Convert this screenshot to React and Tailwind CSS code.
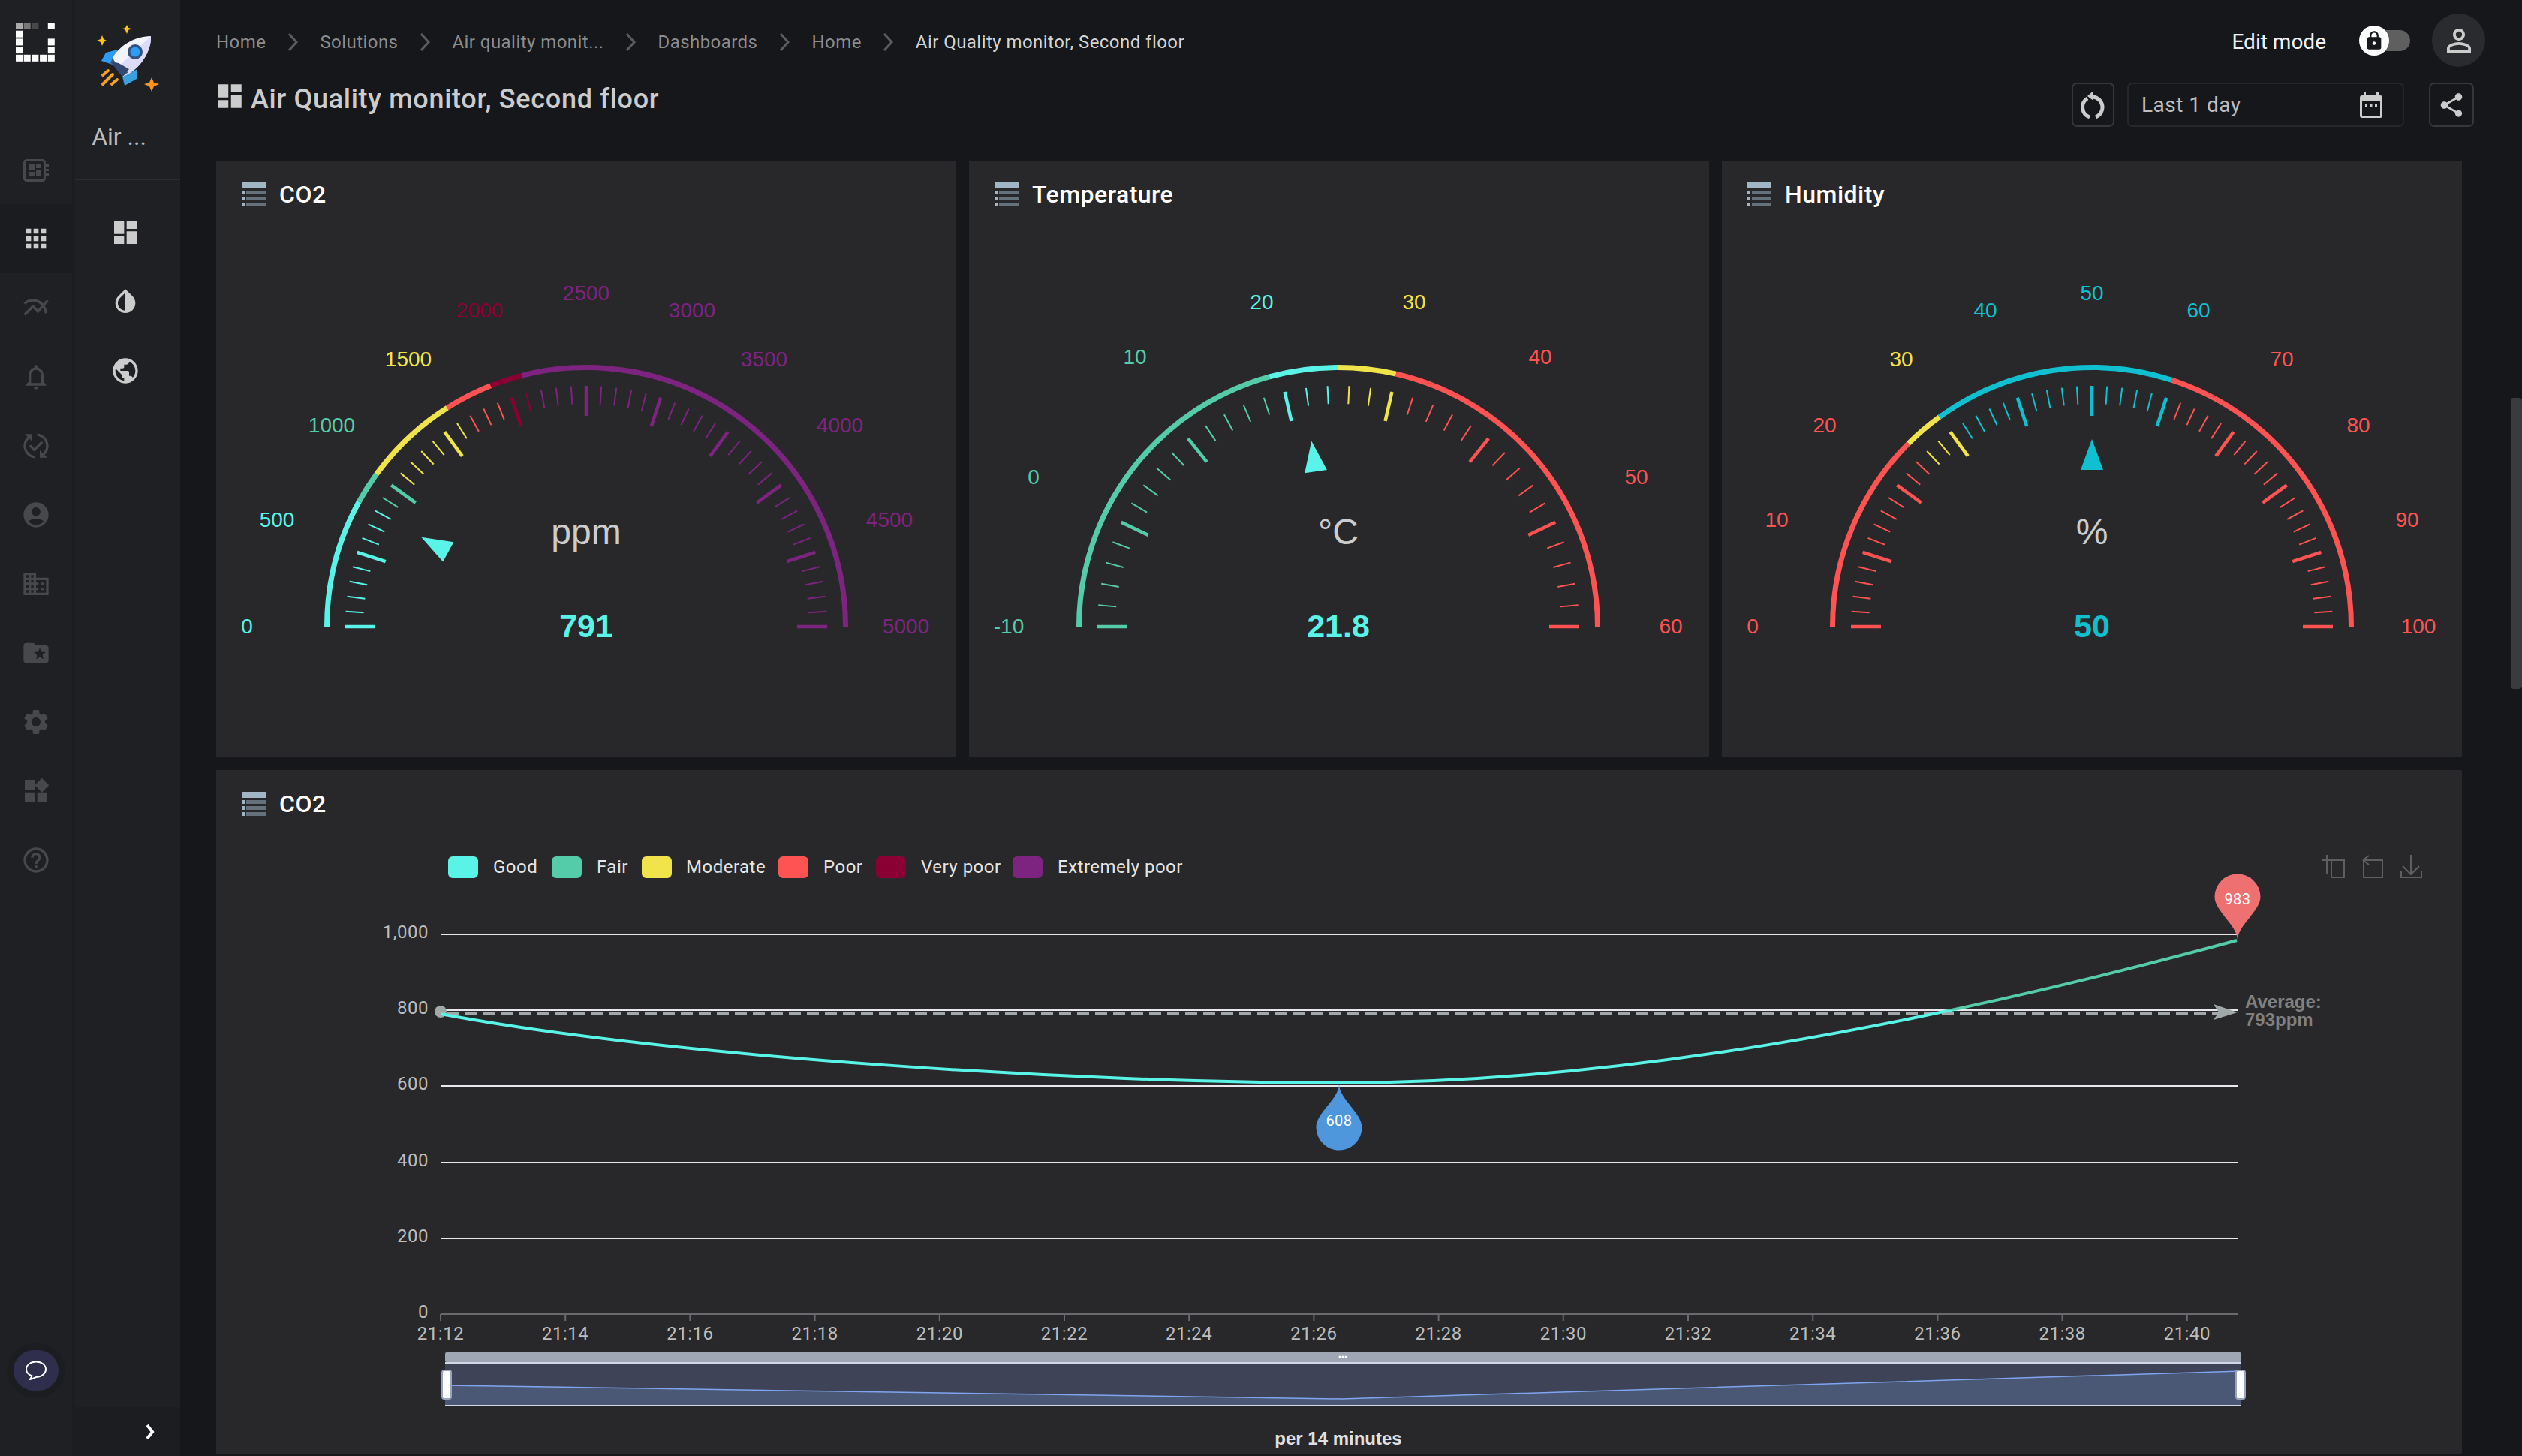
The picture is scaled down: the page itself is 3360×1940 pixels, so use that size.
import {
  MdApps, MdMultilineChart, MdNotificationsNone, MdPublishedWithChanges, MdAccountCircle, MdDomain,
  MdFolderSpecial, MdSettings, MdWidgets, MdHelpOutline, MdDashboard, MdInvertColors, MdPublic,
  MdShare, MdLock, MdPersonOutline,
} from 'react-icons/md';

const CYAN = '#5af3e7';
const GREEN = '#55cca9';
const YELLOW = '#f0e44a';
const RED = '#ff5252';
const DARKRED = '#8b0032';
const PURPLE = '#7c2480';
const TEAL = '#10c0d0';

const GAUGES = [
  {
    title: 'CO2', x: 288, cx: 781, min: 0, max: 5000, splits: 10, value: 791, text: '791', unit: 'ppm',
    stops: [[800, CYAN], [1000, GREEN], [1600, YELLOW], [1900, RED], [2100, DARKRED], [5000, PURPLE]],
    labels: [[0, 329, 834], [500, 369, 692], [1000, 442, 566], [1500, 544, 478], [2000, 639, 413], [2500, 781, 390], [3000, 922, 413], [3500, 1018, 478], [4000, 1119, 566], [4500, 1185, 692], [5000, 1207, 834]],
  },
  {
    title: 'Temperature', x: 1291, cx: 1783, min: -10, max: 60, splits: 7, value: 21.8, text: '21.8', unit: '°C',
    stops: [[19, GREEN], [25, CYAN], [30, YELLOW], [60, RED]],
    labels: [[-10, 1344, 834], [0, 1377, 635], [10, 1512, 475], [20, 1681, 402], [30, 1884, 402], [40, 2052, 475], [50, 2180, 635], [60, 2226, 834]],
  },
  {
    title: 'Humidity', x: 2294, cx: 2787, min: 0, max: 100, splits: 10, value: 50, text: '50', unit: '%',
    stops: [[25, RED], [30, YELLOW], [60, TEAL], [100, RED]],
    labels: [[0, 2335, 834], [10, 2367, 692], [20, 2431, 566], [30, 2533, 478], [40, 2645, 413], [50, 2787, 390], [60, 2929, 413], [70, 3040, 478], [80, 3142, 566], [90, 3207, 692], [100, 3222, 834]],
  },
];

const LEGEND = [
  ['Good', CYAN, 597, 657], ['Fair', GREEN, 735, 795], ['Moderate', YELLOW, 855, 914],
  ['Poor', RED, 1037, 1097], ['Very poor', DARKRED, 1167, 1227], ['Extremely poor', PURPLE, 1349, 1409],
];

const TIMES = ['21:12', '21:14', '21:16', '21:18', '21:20', '21:22', '21:24', '21:26', '21:28', '21:30', '21:32', '21:34', '21:36', '21:38', '21:40'];
const Y_AXIS = [['1,000', 1245], ['800', 1346], ['600', 1447], ['400', 1549], ['200', 1650]];
const CRUMBS = ['Home', 'Solutions', 'Air quality monit...', 'Dashboards', 'Home'];

const RAIL = [MdMultilineChart, MdNotificationsNone, MdPublishedWithChanges, MdAccountCircle, MdDomain, MdFolderSpecial, MdSettings, MdWidgets, MdHelpOutline];
const PIN = 'M0,0 C-1,-20 -30.5,-38 -30.5,-57 A30.5,30.5 0 0 1 30.5,-57 C30.5,-38 1,-20 0,0 Z';

const polar = (cx, cy, r, deg) => {
  const a = (deg * Math.PI) / 180;
  return [cx - r * Math.cos(a), cy - r * Math.sin(a)];
};

function TableIcon() {
  return (
    <svg width="32" height="32" viewBox="0 0 32 32">
      <rect width="32" height="8" fill="#a0b6c5" />
      {[11, 19, 27].map((y) => (
        <g key={y}>
          <rect y={y} width="4" height="5" fill="#a0b6c5" />
          <rect x="6" y={y} width="26" height="5" fill="#65727b" />
        </g>
      ))}
    </svg>
  );
}

function CardTitle({ children }) {
  return (
    <div className="flex items-center gap-[18px] h-[88px] pl-[34px] pt-[1px] text-[32px] leading-none font-medium tracking-[0.5px] text-white">
      <TableIcon />
      <span>{children}</span>
    </div>
  );
}

function Gauge({ g }) {
  const cy = 835;
  const colorFor = (v) => g.stops.find(([limit]) => v <= limit + 0.0001)[1];
  const deg = (v) => ((v - g.min) / (g.max - g.min)) * 180;
  const total = g.splits * 5;
  const mainColor = colorFor(g.value);
  const a = deg(g.value);
  const tip = polar(g.cx, cy, 250, a);
  const base = polar(g.cx, cy, 209, a);
  const rad = (a * Math.PI) / 180;
  const nx = Math.sin(rad) * 15;
  const ny = -Math.cos(rad) * 15;

  let prev = g.min;
  const arcs = g.stops.map(([limit, color]) => {
    const [x1, y1] = polar(g.cx, cy, 345.5, deg(prev));
    const [x2, y2] = polar(g.cx, cy, 345.5, deg(limit));
    prev = limit;
    return <path key={limit} d={`M${x1} ${y1} A345.5 345.5 0 0 1 ${x2} ${y2}`} fill="none" stroke={color} strokeWidth="7" />;
  });

  const ticks = [];
  for (let i = 0; i <= total; i++) {
    const v = g.min + ((g.max - g.min) * i) / total;
    const major = i % 5 === 0;
    const [x1, y1] = polar(g.cx, cy, 321, (i / total) * 180);
    const [x2, y2] = polar(g.cx, cy, major ? 281 : 297, (i / total) * 180);
    ticks.push(<line key={i} x1={x1} y1={y1} x2={x2} y2={y2} stroke={colorFor(v)} strokeWidth={major ? 4.5 : 2} />);
  }

  return (
    <div className="bg-[#28282a] h-[794px]">
      <CardTitle>{g.title}</CardTitle>
      <svg className="block font-['Liberation_Sans',sans-serif]" width="986" height="706" viewBox={`${g.x} 302 986 706`}>
        {arcs}
        {ticks}
        <polygon points={`${tip[0]},${tip[1]} ${base[0] + nx},${base[1] + ny} ${base[0] - nx},${base[1] - ny}`} fill={mainColor} />
        {g.labels.map(([v, x, y]) => (
          <text key={v} x={x} y={y + 10} textAnchor="middle" fontSize="28" fill={colorFor(v)}>{v}</text>
        ))}
        <text x={g.cx} y="725" textAnchor="middle" fontSize="48" fill="#cccccc">{g.unit}</text>
        <text x={g.cx} y="849" textAnchor="middle" fontSize="43" fontWeight="700" fill={mainColor}>{g.text}</text>
      </svg>
    </div>
  );
}

function LineChart() {
  return (
    <svg className="block" width="2992" height="824" viewBox="288 1114 2992 824" letterSpacing="0.5">
      <defs>
        <linearGradient id="co2Line" gradientUnits="userSpaceOnUse" x1="0" y1="1340" x2="0" y2="1352">
          <stop offset="0.5" stopColor={GREEN} />
          <stop offset="0.5" stopColor={CYAN} />
        </linearGradient>
      </defs>

      {LEGEND.map(([name, color, sx, tx]) => (
        <g key={name}>
          <rect x={sx} y="1141" width="40" height="29" rx="6" fill={color} />
          <text x={tx} y="1163" fontSize="24" fill="#e4e4e4">{name}</text>
        </g>
      ))}

      <g fill="none" stroke="#5f5f61" strokeWidth="2">
        <path d="M3093 1146h14M3100 1139v25M3106 1146h17v23h-17z" />
        <path d="M3148 1146h26v23h-25v-23M3148 1146l8 -6M3148 1146l8 6" />
        <path d="M3212 1139v26M3201 1154l11 11l11 -11M3199 1161v8h27v-8" />
      </g>

      {Y_AXIS.map(([label, y]) => (
        <g key={label}>
          <line x1="587" y1={y} x2="2981" y2={y} stroke="#e8e8ee" strokeWidth="2" />
          <text x="571" y={y + 5} textAnchor="end" fontSize="24" fill="#bcbcbc">{label}</text>
        </g>
      ))}
      <text x="571" y="1756" textAnchor="end" fontSize="24" fill="#bcbcbc">0</text>

      <line x1="587" y1="1751" x2="2982" y2="1751" stroke="#6a6a6e" strokeWidth="2" />
      {TIMES.map((t, i) => (
        <g key={t}>
          <line x1={587 + i * 166.2} y1="1751" x2={587 + i * 166.2} y2="1760" stroke="#6a6a6e" strokeWidth="2" />
          <text x={587 + i * 166.2} y="1785" textAnchor="middle" fontSize="24" fill="#bcbcbc">{t}</text>
        </g>
      ))}

      <line x1="595" y1="1350" x2="2956" y2="1350" stroke="#a0a8a8" strokeWidth="4" strokeDasharray="16 8" />
      <circle cx="587" cy="1348" r="8" fill="#a0a8a8" />
      <polygon points="2949,1338 2981,1349 2949,1359 2956,1349" fill="#a0a8a8" />
      <g className="font-['Liberation_Sans',sans-serif]" fontSize="24" fontWeight="700" letterSpacing="0">
        <text x="2991" y="1343" fill="#808080">Average:</text>
        <text x="2991" y="1367" fill="#808080">793ppm</text>
        <text x="1783" y="1925" textAnchor="middle" fill="#e0e0e0">per 14 minutes</text>
      </g>

      <path d="M587 1351 C900 1410 1450 1443 1783 1443 C2150 1443 2550 1370 2980 1253" fill="none" stroke="url(#co2Line)" strokeWidth="4" />

      <path d={PIN} transform="translate(2981 1252)" fill="#ee7070" />
      <text x="2981" y="1205" textAnchor="middle" fontSize="20" fill="#ffffff">983</text>
      <path d={PIN} transform="translate(1784 1445) scale(1 -1)" fill="#4e97dd" />
      <text x="1784" y="1500" textAnchor="middle" fontSize="20" fill="#ffffff">608</text>

      <rect x="593" y="1802" width="2393" height="13" rx="2" fill="#9fa7b4" />
      <rect x="593" y="1815" width="2393" height="59" fill="#3e4358" />
      <path d="M593 1846 L1787 1864 L2985 1827 V1873 H593 Z" fill="#4b5875" />
      <path d="M593 1846 L1787 1864 L2985 1827" fill="none" stroke="#7fa5f0" strokeWidth="1.5" />
      <line x1="593" y1="1816" x2="2986" y2="1816" stroke="#d0d8e8" strokeWidth="2" />
      <line x1="593" y1="1873" x2="2986" y2="1873" stroke="#d0d8e8" strokeWidth="2" />
      <g fill="#ffffff">
        <circle cx="1785" cy="1808" r="1.5" />
        <circle cx="1789" cy="1808" r="1.5" />
        <circle cx="1793" cy="1808" r="1.5" />
      </g>
      <rect x="589" y="1826" width="12" height="38" rx="3" fill="#ffffff" stroke="#9aa6bf" strokeWidth="2" />
      <rect x="2979" y="1826" width="12" height="38" rx="3" fill="#ffffff" stroke="#9aa6bf" strokeWidth="2" />
    </svg>
  );
}

function Logo() {
  const cells = [];
  for (let r = 0; r < 5; r++) {
    for (let c = 0; c < 5; c++) {
      const on = r === 0 ? c !== 3 : r === 1 ? c === 0 : r === 4 ? true : c === 0 || c === 4;
      if (!on) continue;
      const fill = r === 0 && c < 3 ? ['#aaaaaa', '#777777', '#484848'][c] : '#ffffff';
      cells.push(<rect key={`${r}-${c}`} x={c * 10.7} y={r * 10.7} width="9" height="9" fill={fill} />);
    }
  }
  return <svg width="52" height="52" viewBox="0 0 52 52">{cells}</svg>;
}

function ChipIcon() {
  return (
    <svg width="34" height="30" viewBox="0 0 34 30" fill="#47484c">
      <rect x="1.5" y="1.5" width="27" height="27" rx="3" fill="none" stroke="#47484c" strokeWidth="3" />
      <rect x="7" y="7" width="8" height="8" />
      <rect x="7" y="17" width="8" height="6" />
      <rect x="17" y="7" width="7" height="5" />
      <rect x="17" y="14" width="7" height="9" />
      <rect x="30" y="7" width="4" height="3" />
      <rect x="30" y="13" width="4" height="3" />
      <rect x="30" y="19" width="4" height="3" />
    </svg>
  );
}

function Rocket() {
  return (
    <svg width="90" height="95" viewBox="125 30 90 95">
      <path d="M169 33l2 4l4 1l-4 2l-2 5l-2 -5l-4 -2l4 -1z" fill="#ffc90a" />
      <path d="M136 47l2 5l4 2l-4 2l-2 5l-2 -5l-5 -2l5 -2z" fill="#ffc90a" />
      <path d="M202 103l3 7l7 2l-7 3l-3 7l-3 -7l-7 -3l7 -2z" fill="#ff9320" />
      <path d="M157 66l-16 4l-6 11l15 5z" fill="#2f9cf4" />
      <path d="M183 92l-1 13l-16 9l-3 -12z" fill="#3aa0dc" />
      <path d="M150 77C158 62 178 48 201 48C202 68 186 94 163 102z" fill="#f4f4fc" />
      <path d="M201 48C202 68 186 94 163 102L156 90z" fill="#dcdcf8" />
      <path d="M150 77L163 102L171 96L147 84z" fill="#3f5a85" />
      <path d="M147 82L163 102L172 92L158 84z" fill="#33496f" />
      <circle cx="180" cy="69" r="10" fill="#34527f" />
      <circle cx="180" cy="69" r="6.5" fill="#2d9cf5" />
      <g stroke="#f5a020" strokeWidth="4" strokeLinecap="round">
        <path d="M137 100l7 -6" />
        <path d="M137 112l13 -13" />
        <path d="M149 112l7 -6" />
      </g>
    </svg>
  );
}

function Sidebars() {
  return (
    <>
      <aside className="w-24 shrink-0 bg-[#1f2024] flex flex-col items-center">
        <div className="h-[180px] pt-[30px] w-full flex justify-center pr-[2px]"><Logo /></div>
        <div className="h-[92px] w-full flex items-center justify-center pt-[2px]"><ChipIcon /></div>
        <div className="h-[92px] w-full flex items-center justify-center bg-[#1b1c20]">
          <MdApps size={40} className="text-[#cccccc]" />
        </div>
        {RAIL.map((Icon, i) => (
          <div key={i} className="h-[92px] w-full flex items-center justify-center">
            <Icon size={40} className="text-[#47484c]" />
          </div>
        ))}
        <div className="mt-auto mb-[87px] w-[60px] h-[54px] rounded-full bg-[#2f2e4d] ring-[9px] ring-[#1c1d21] flex items-center justify-center">
          <svg width="30" height="27" viewBox="0 0 30 27" fill="none" stroke="#ffffff" strokeWidth="2">
            <path d="M15 1.5C7.5 1.5 2 6 2 11.5C2 16 5.5 19 9.5 20.5L7 25C10 24.5 13 23 15 22C22.5 22 28 17 28 11.5C28 6 22.5 1.5 15 1.5Z" />
          </svg>
        </div>
      </aside>
      <aside className="w-[144px] shrink-0 bg-[#1f2024] border-l-4 border-[#1c1d21] flex flex-col">
        <div className="h-[240px] border-b-2 border-[#2c2d30] flex flex-col items-center pt-[30px]">
          <Rocket />
          <div className="mt-[41px] text-[32px] leading-none text-[#bdbdbd] pr-[23px]">Air ...</div>
        </div>
        <div className="pt-[24px] flex flex-col">
          {[MdDashboard, MdInvertColors, MdPublic].map((Icon, i) => (
            <div key={i} className="h-[92px] flex items-center justify-center pr-[6px]">
              <Icon size={40} className="text-[#cccccc]" />
            </div>
          ))}
        </div>
        <div className="mt-auto h-[65px] bg-[#1c1d21] flex items-center justify-end pr-[34px]">
          <svg width="12" height="20" viewBox="0 0 12 20" fill="none" stroke="#ffffff" strokeWidth="4">
            <path d="M2 1l7 9l-7 9" />
          </svg>
        </div>
      </aside>
    </>
  );
}

function Header() {
  return (
    <header className="h-[107px] flex items-center justify-between pl-[48px] pr-[49px]">
      <nav className="flex items-center text-[24px] leading-none tracking-[0.45px] text-[#8c8c8c] pt-[5px]">
        {CRUMBS.map((c, i) => (
          <div key={i} className="flex items-center">
            <span>{c}</span>
            <span className="w-[72px] flex justify-center">
              <svg width="15" height="24" viewBox="0 0 15 24" fill="none" stroke="#5c5c5c" strokeWidth="3">
                <path d="M2 1l10 11l-10 11" />
              </svg>
            </span>
          </div>
        ))}
        <span className="text-[#d4d4d4]">Air Quality monitor, Second floor</span>
      </nav>
      <div className="flex items-center">
        <span className="text-[28px] leading-none text-[#f0f0f0] pt-[5px]">Edit mode</span>
        <div className="relative ml-[45px] w-[67px] h-[28px] rounded-full bg-[#5f5f5f]">
          <div className="absolute -left-[1px] -top-[6px] w-[40px] h-[40px] rounded-full bg-white flex items-center justify-center">
            <MdLock size={28} className="text-[#16171b]" />
          </div>
        </div>
        <div className="ml-[29px] w-[71px] h-[71px] rounded-full bg-[#2a2b2e] flex items-center justify-center">
          <MdPersonOutline size={48} className="text-[#cccccc]" />
        </div>
      </div>
    </header>
  );
}

function Toolbar() {
  return (
    <div className="h-[107px] flex items-start justify-between pl-[48px] pr-[64px]">
      <div className="flex items-center gap-[7px] text-[36px] leading-none font-medium tracking-[0.7px] text-[#cccccc] h-[50px]">
        <MdDashboard size={42} className="text-[#cccccc] -ml-[3px] -mt-[8px]" />
        <span>Air Quality monitor, Second floor</span>
      </div>
      <div className="flex items-center h-[59px] mt-[3px]">
        <button className="w-[57px] h-[59px] rounded-[7px] border-2 border-[#36373a] flex items-center justify-center">
          <svg width="33" height="38" viewBox="0 0 33 38" fill="none" stroke="#cccccc" strokeWidth="5">
            <path d="M16.5 8A14 14 0 0 1 20 35" />
            <path d="M12 35A14 14 0 0 1 9 10" />
            <path d="M17 0L17 13L9 7Z" fill="#cccccc" stroke="none" />
          </svg>
        </button>
        <div className="ml-[17px] w-[369px] h-[59px] rounded-[7px] border-2 border-[#26272b] flex items-center justify-between pl-[17px] pr-[27px] text-[28px] leading-none text-[#bdbdbd]">
          <span className="tracking-[0.5px]">Last 1 day</span>
          <svg width="30" height="34" viewBox="0 0 30 34">
            <path d="M5 0h3v4h14v-4h3v4h2a3 3 0 0 1 3 3v24a3 3 0 0 1 -3 3h-24a3 3 0 0 1 -3 -3v-24a3 3 0 0 1 3 -3h2z" fill="#cccccc" />
            <rect x="3" y="12" width="24" height="19" fill="#16171b" />
            <rect x="7" y="16" width="3" height="3" fill="#cccccc" />
            <rect x="13.5" y="16" width="3" height="3" fill="#cccccc" />
            <rect x="20" y="16" width="3" height="3" fill="#cccccc" />
          </svg>
        </div>
        <button className="ml-[33px] w-[60px] h-[59px] rounded-[7px] border-2 border-[#36373a] flex items-center justify-center">
          <MdShare size={38} className="text-[#cccccc]" />
        </button>
      </div>
    </div>
  );
}

export default function App() {
  return (
    <div className="relative w-[3360px] h-[1940px] overflow-hidden flex bg-[#16171b] font-['Roboto',sans-serif]">
      <Sidebars />
      <main className="flex-1 min-w-0 flex flex-col">
        <Header />
        <Toolbar />
        <div className="pl-[48px] pr-[80px] flex flex-col gap-[18px]">
          <div className="grid grid-cols-3 gap-x-[17px]">
            {GAUGES.map((g) => <Gauge key={g.title} g={g} />)}
          </div>
          <div className="bg-[#28282a] h-[912px]">
            <CardTitle>CO2</CardTitle>
            <LineChart />
          </div>
        </div>
      </main>
      <div className="absolute right-0 top-[530px] w-[15px] h-[388px] rounded-[4px] bg-[#3a3b3e]" />
    </div>
  );
}
